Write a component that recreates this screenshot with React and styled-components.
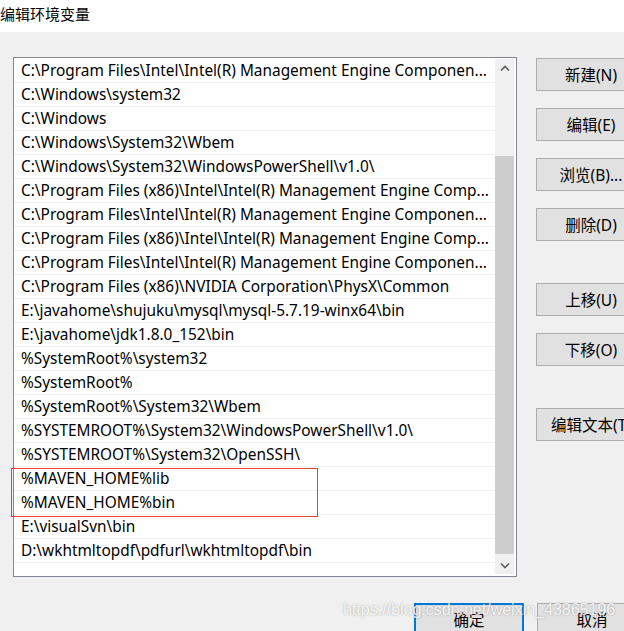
import React from "react";
import styled, { createGlobalStyle } from "styled-components";

const Global = createGlobalStyle`
  html, body { margin: 0; padding: 0; }
  body {
    background: #f0f0f0;
    width: 624px;
    height: 631px;
    overflow: hidden;
    font-family: "Noto Sans", "Noto Sans CJK SC", sans-serif;
    color: #000;
  }
`;

const Window = styled.div`
  position: relative;
  width: 624px;
  height: 631px;
  overflow: hidden;
  background: #f0f0f0;
`;

const TitleBar = styled.div`
  height: 32px;
  background: #fff;
  font-size: 15px;
  line-height: 27px;
  padding-left: 0;
  font-family: "Noto Sans CJK SC", sans-serif;
`;

const Body = styled.div`
  display: flex;
  align-items: flex-start;
  padding: 25px 0 0 13px;
  gap: 19px;
`;

const ListBox = styled.div`
  flex-shrink: 0;
  width: 502px;
  height: 518px;
  border: 1px solid #828790;
  background: #fff;
  display: flex;
`;

const Rows = styled.div`
  width: 481px;
  padding-top: 1px;
  display: flex;
  flex-direction: column;
`;

const Row = styled.div`
  height: 23px;
  border-bottom: 1px solid #f0f0f0;
  padding-left: 7px;
  font-size: 15.4px;
  line-height: 24px;
  white-space: nowrap;
  overflow: hidden;
`;

const ScrollBar = styled.div`
  width: 19px;
  margin: 1px 0 2px 0;
  background: #f0f0f0;
  display: flex;
  flex-direction: column;
`;

const ArrowBox = styled.div`
  height: 17px;
  display: flex;
  align-items: center;
  justify-content: center;
`;

const Track = styled.div`
  flex: 1;
  display: flex;
  flex-direction: column;
  padding-top: 80px;
`;

const Thumb = styled.div`
  height: 398px;
  background: #cdcdcd;
`;

const ButtonCol = styled.div`
  flex-shrink: 0;
  display: flex;
  flex-direction: column;
  padding-top: 1px;
`;

const Button = styled.div`
  box-sizing: border-box;
  width: 110px;
  height: 33px;
  flex-shrink: 0;
  margin-top: ${(p) => p.$gap || 0}px;
  background: #e1e1e1;
  border: ${(p) => (p.$primary ? "2px solid #0078d7" : "1px solid #adadad")};
  display: flex;
  align-items: center;
  justify-content: center;
  font-size: 15.5px;
  font-family: "Noto Sans", "Noto Sans CJK SC", sans-serif;
  white-space: nowrap;
`;

const Footer = styled.div`
  display: flex;
  gap: 13px;
  padding: 26px 0 0 414px;
`;

const Highlight = styled.div`
  position: absolute;
  left: 11px;
  top: 468px;
  width: 305px;
  height: 47px;
  border: 1px solid #e8413c;
  pointer-events: none;
`;

const Watermark = styled.div`
  position: absolute;
  left: 343px;
  top: 601px;
  font-family: "Liberation Sans", Arial, sans-serif;
  font-size: 16px;
  color: rgba(255, 255, 255, 0.85);
  text-shadow: 0 0 2px rgba(110, 110, 110, 0.6);
  white-space: nowrap;
  pointer-events: none;
`;

const Chevron = ({ up }) => (
  <svg width="10" height="6" viewBox="0 0 10 6">
    <path
      d={up ? "M1 5.5 L5 1.5 L9 5.5" : "M1 0.5 L5 4.5 L9 0.5"}
      fill="none"
      stroke="#606060"
      strokeWidth="1.6"
    />
  </svg>
);

const paths = [
  "C:\\Program Files\\Intel\\Intel(R) Management Engine Componen...",
  "C:\\Windows\\system32",
  "C:\\Windows",
  "C:\\Windows\\System32\\Wbem",
  "C:\\Windows\\System32\\WindowsPowerShell\\v1.0\\",
  "C:\\Program Files (x86)\\Intel\\Intel(R) Management Engine Comp...",
  "C:\\Program Files\\Intel\\Intel(R) Management Engine Componen...",
  "C:\\Program Files (x86)\\Intel\\Intel(R) Management Engine Comp...",
  "C:\\Program Files\\Intel\\Intel(R) Management Engine Componen...",
  "C:\\Program Files (x86)\\NVIDIA Corporation\\PhysX\\Common",
  "E:\\javahome\\shujuku\\mysql\\mysql-5.7.19-winx64\\bin",
  "E:\\javahome\\jdk1.8.0_152\\bin",
  "%SystemRoot%\\system32",
  "%SystemRoot%",
  "%SystemRoot%\\System32\\Wbem",
  "%SYSTEMROOT%\\System32\\WindowsPowerShell\\v1.0\\",
  "%SYSTEMROOT%\\System32\\OpenSSH\\",
  "%MAVEN_HOME%lib",
  "%MAVEN_HOME%bin",
  "E:\\visualSvn\\bin",
  "D:\\wkhtmltopdf\\pdfurl\\wkhtmltopdf\\bin",
];

const sideButtons = [
  { label: "新建(N)", gap: 0 },
  { label: "编辑(E)", gap: 17 },
  { label: "浏览(B)...", gap: 17 },
  { label: "删除(D)", gap: 17 },
  { label: "上移(U)", gap: 42 },
  { label: "下移(O)", gap: 17 },
  { label: "编辑文本(T)", gap: 42 },
];

export default function App() {
  return (
    <Window>
      <Global />
      <TitleBar>编辑环境变量</TitleBar>
      <Body>
        <ListBox>
          <Rows>
            {paths.map((p, i) => (
              <Row key={i}>{p}</Row>
            ))}
          </Rows>
          <ScrollBar>
            <ArrowBox>
              <Chevron up />
            </ArrowBox>
            <Track>
              <Thumb />
            </Track>
            <ArrowBox>
              <Chevron />
            </ArrowBox>
          </ScrollBar>
        </ListBox>
        <ButtonCol>
          {sideButtons.map((b) => (
            <Button key={b.label} $gap={b.gap}>
              {b.label}
            </Button>
          ))}
        </ButtonCol>
      </Body>
      <Footer>
        <Button $primary>确定</Button>
        <Button>取消</Button>
      </Footer>
      <Highlight />
      <Watermark>https://blog.csdn.net/weixin_43865196</Watermark>
    </Window>
  );
}
